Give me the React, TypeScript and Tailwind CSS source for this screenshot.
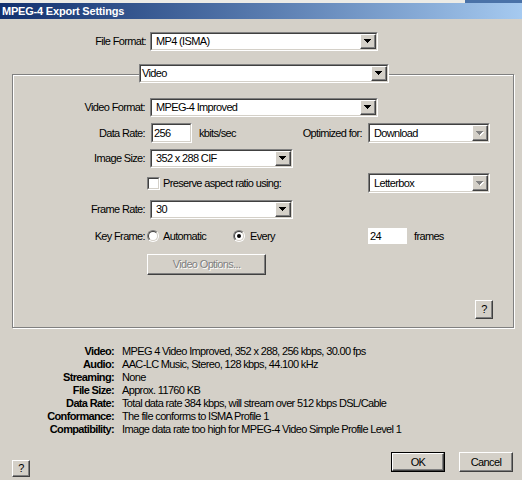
import React from 'react';

const sunkenOuter = 'border border-t-[#808080] border-l-[#808080] border-r-white border-b-white';
const sunkenInner = 'border border-t-[#404040] border-l-[#404040] border-r-[#d4d0c8] border-b-[#d4d0c8]';
const raised =
  'border border-t-white border-l-white border-r-[#404040] border-b-[#404040] shadow-[inset_-1px_-1px_0_#808080] bg-[#d4d0c8]';

function Arrow({ disabled }: { disabled?: boolean }) {
  const rows = [
    [0, 7],
    [1, 5],
    [2, 3],
    [3, 1],
  ];
  return (
    <svg width="8" height="5" viewBox="0 0 8 5" shapeRendering="crispEdges">
      {disabled &&
        rows.map(([i, w]) => <rect key={'s' + i} x={i + 1} y={i + 1} width={w} height={1} fill="#ffffff" />)}
      {rows.map(([i, w]) => (
        <rect key={i} x={i} y={i} width={w} height={1} fill={disabled ? '#808080' : '#000000'} />
      ))}
    </svg>
  );
}

function Combo({ text, className, disabled, pad = 'pl-[4px]' }: { text: string; className: string; disabled?: boolean; pad?: string }) {
  return (
    <div className={`flex shrink-0 ${sunkenOuter} ${className}`}>
      <div className={`flex flex-1 bg-white ${sunkenInner}`}>
        <span className={`flex-1 flex items-center whitespace-nowrap ${pad}`}>{text}</span>
        <div className={`w-[16px] flex items-center justify-center ${raised}`}>
          <Arrow disabled={disabled} />
        </div>
      </div>
    </div>
  );
}

function TextBox({ text, className }: { text: string; className: string }) {
  return (
    <div className={`flex shrink-0 ${sunkenOuter} ${className}`}>
      <div className={`flex flex-1 items-center bg-white pl-[1px] ${sunkenInner}`}>{text}</div>
    </div>
  );
}

function Radio({ checked }: { checked?: boolean }) {
  return (
    <div className="w-[12px] h-[12px] shrink-0 rounded-full border border-t-[#808080] border-l-[#808080] border-r-white border-b-white">
      <div className="w-full h-full rounded-full bg-white flex items-center justify-center border border-t-[#404040] border-l-[#404040] border-r-[#d4d0c8] border-b-[#d4d0c8]">
        {checked && <div className="w-[4px] h-[4px] rounded-full bg-black" />}
      </div>
    </div>
  );
}

function Label({ children }: { children: React.ReactNode }) {
  return <span className="w-[132px] shrink-0 text-right whitespace-nowrap">{children}</span>;
}

const info: [string, string][] = [
  ['Video:', 'MPEG 4 Video Improved, 352 x 288, 256 kbps, 30.00 fps'],
  ['Audio:', 'AAC-LC Music, Stereo, 128 kbps, 44.100 kHz'],
  ['Streaming:', 'None'],
  ['File Size:', 'Approx. 11760 KB'],
  ['Data Rate:', 'Total data rate 384 kbps, will stream over 512 kbps DSL/Cable'],
  ['Conformance:', 'The file conforms to ISMA Profile 1'],
  ['Compatibility:', 'Image data rate too high for MPEG-4 Video Simple Profile Level 1'],
];

export default function App() {
  return (
    <div className="w-[522px] h-[480px] overflow-hidden bg-[#d4d0c8] flex flex-col text-[11px] leading-none tracking-[-0.65px] text-black font-['Liberation_Sans',Arial,sans-serif]">
      {/* window edge above */}
      <div className="h-[3px] flex">
        <div className="flex-1 bg-[#ecebe6]" />
        <div className="w-[57px] bg-[#4a72a8]" />
      </div>

      {/* title bar */}
      <div className="h-[16px] flex items-center pl-[2px] bg-gradient-to-r from-[#12306e] to-[#a6caf0] text-white font-bold tracking-[-0.2px]">
        MPEG-4 Export Settings
      </div>

      {/* file format */}
      <div className="mt-[13px] h-[19px] flex items-center">
        <span className="w-[146px] text-right">File Format:</span>
        <Combo text="MP4 (ISMA)" className="ml-[4px] w-[228px] h-[19px]" />
      </div>

      {/* group box */}
      <div className="mt-[23px] ml-[12px] w-[502px] h-[254px] flex flex-col border border-[#808080] shadow-[inset_1px_1px_0_#ffffff,1px_1px_0_#ffffff]">
        <Combo text="Video" pad="pl-[1px]" className="-mt-[11px] ml-[126px] w-[250px] h-[19px]" />

        <div className="mt-[15px] h-[19px] flex items-center">
          <Label>Video Format:</Label>
          <Combo text="MPEG-4 Improved" className="ml-[5px] w-[228px] h-[19px]" />
        </div>

        <div className="mt-[6px] h-[20px] flex items-center">
          <Label>Data Rate:</Label>
          <TextBox text="256" className="ml-[6px] w-[41px] h-[20px]" />
          <span className="ml-[7px]">kbits/sec</span>
          <span className="ml-auto whitespace-nowrap">Optimized for:</span>
          <Combo text="Download" disabled className="ml-[6px] mr-[23px] w-[122px] h-[20px]" />
        </div>

        <div className="mt-[6px] h-[19px] flex items-center">
          <Label>Image Size:</Label>
          <Combo text="352 x 288 CIF" className="ml-[5px] w-[143px] h-[19px]" />
        </div>

        <div className="mt-[5px] h-[20px] flex items-center">
          <div className="ml-[134px] w-[13px] h-[13px] shrink-0 border border-t-[#808080] border-l-[#808080] border-r-white border-b-white">
            <div className="w-full h-full bg-white border border-t-[#404040] border-l-[#404040] border-r-[#d4d0c8] border-b-[#d4d0c8]" />
          </div>
          <span className="ml-[3px]">Preserve aspect ratio using:</span>
          <Combo text="Letterbox" disabled className="ml-auto mr-[23px] w-[122px] h-[20px]" />
        </div>

        <div className="mt-[7px] h-[19px] flex items-center">
          <Label>Frame Rate:</Label>
          <Combo text="30" className="ml-[5px] w-[143px] h-[19px]" />
        </div>

        <div className="mt-[9px] h-[16px] flex items-center">
          <Label>Key Frame:</Label>
          <div className="ml-[2px]">
            <Radio />
          </div>
          <span className="ml-[4px] w-[70px]">Automatic</span>
          <Radio checked />
          <span className="ml-[5px] w-[118px]">Every</span>
          <div className="w-[39px] h-[16px] bg-white flex items-center pl-[2px]">24</div>
          <span className="ml-[7px]">frames</span>
        </div>

        <div className={`mt-[10px] ml-[134px] w-[119px] h-[21px] flex items-center justify-center text-[#808080] [text-shadow:1px_1px_0_#ffffff] ${raised}`}>
          Video Options...
        </div>

        <div className={`mt-[25px] ml-[462px] w-[18px] h-[19px] flex items-center justify-center ${raised}`}>?</div>
      </div>

      {/* summary */}
      <div className="mt-[17px] flex flex-col">
        {info.map(([k, v]) => (
          <div key={k} className="h-[13px] flex items-center">
            <span className="w-[114px] shrink-0 text-right font-bold">{k}</span>
            <span className="ml-[8px] whitespace-nowrap">{v}</span>
          </div>
        ))}
      </div>

      {/* bottom buttons */}
      <div className="mt-[16px] flex items-start">
        <div className={`mt-[8px] ml-[12px] w-[18px] h-[17px] flex items-center justify-center ${raised}`}>?</div>
        <div className="ml-auto w-[54px] h-[20px] border border-black flex">
          <div className={`flex-1 flex items-center justify-center ${raised}`}>OK</div>
        </div>
        <div className={`ml-[14px] mr-[9px] w-[54px] h-[20px] flex items-center justify-center ${raised}`}>Cancel</div>
      </div>
    </div>
  );
}
